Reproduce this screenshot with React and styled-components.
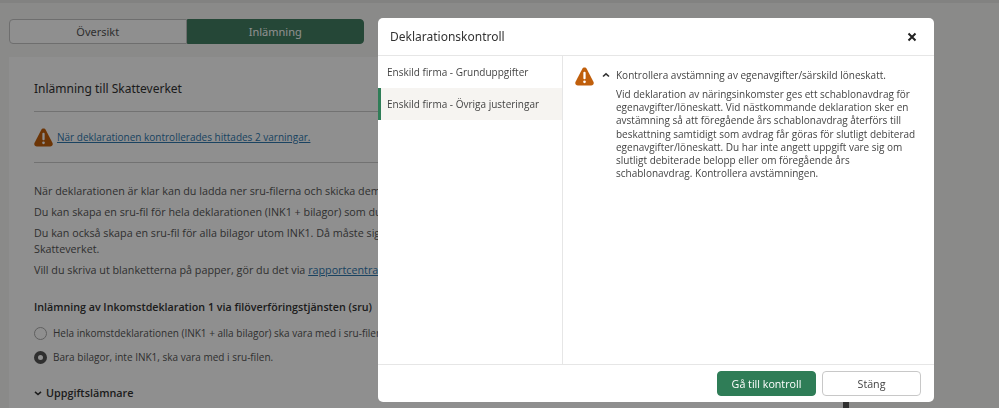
import styled, { createGlobalStyle } from 'styled-components';

const GlobalStyle = createGlobalStyle`
  html, body {
    margin: 0;
    padding: 0;
    height: 100%;
    overflow: hidden;
    background: #f7f7f5;
    font-family: "Open Sans", "Liberation Sans", sans-serif;
    color: #333;
  }
  * { box-sizing: border-box; }
`;

const Page = styled.div`
  height: 408px;
  padding: 16px 0 0 9px;
  border-top: 3px solid #e8e8e6;
  overflow: hidden;
`;

const Tabs = styled.div`
  display: flex;
  width: 355px;
  height: 25px;
`;

const Tab = styled.div`
  flex: 1;
  display: flex;
  align-items: center;
  justify-content: center;
  font-family: "Noto Sans", sans-serif;
  font-size: 11px;
  border: 1px solid ${(p) => (p.$active ? '#437f62' : '#c4c4c4')};
  border-radius: ${(p) => (p.$active ? '0 4px 4px 0' : '4px 0 0 4px')};
  background: ${(p) => (p.$active ? '#437f62' : '#fff')};
  color: ${(p) => (p.$active ? '#fff' : '#555')};
`;

const Panel = styled.div`
  width: 834px;
  height: 400px;
  margin-top: 13px;
  padding: 22px 25px;
  background: #fff;
`;

const Title = styled.h2`
  margin: 0;
  padding-bottom: 12px;
  font-family: "Noto Sans", sans-serif;
  font-size: 12px;
  font-weight: 400;
  line-height: 20px;
  border-bottom: 1px solid #ccc;
`;

const WarningRow = styled.div`
  display: flex;
  align-items: center;
  gap: 4px;
  height: 51px;
  border-bottom: 1px solid #ccc;
  font-size: 10px;
`;

const Body = styled.div`
  margin-top: 20px;
  font-size: 10.75px;
  line-height: 16px;
  color: #555;

  p {
    margin: 0 0 5px;
    white-space: nowrap;
  }
`;

const Link = styled.a`
  color: #2f78ae;
  text-decoration: underline;
`;

const SubHeading = styled.h3`
  margin: 21px 0 6px;
  font-size: 10.7px;
  font-weight: 600;
  line-height: 16px;
  color: #333;
  white-space: nowrap;
`;

const RadioRow = styled.label`
  display: flex;
  align-items: center;
  gap: 6px;
  height: 24px;
  font-size: 10px;
  color: #555;
  white-space: nowrap;
`;

const RadioDot = styled.span`
  width: 13px;
  height: 13px;
  border-radius: 50%;
  background: #fff;
  border: ${(p) => (p.$checked ? '4px solid #555' : '1px solid #aaa')};
`;

const Expander = styled.div`
  display: flex;
  align-items: center;
  gap: 4px;
  margin-top: 16px;
  font-size: 10.8px;
  font-weight: 600;
  color: #333;
`;

const Backdrop = styled.div`
  position: fixed;
  top: 0;
  left: 0;
  width: 100%;
  height: 100%;
  background: #000;
  opacity: 0.44;
`;

const ScrollThumb = styled.div`
  position: fixed;
  left: 843px;
  top: 402px;
  width: 6px;
  height: 6px;
  background: #2e2e2e;
`;

const Modal = styled.div`
  position: fixed;
  left: 378px;
  top: 18px;
  width: 556px;
  height: 384px;
  display: flex;
  flex-direction: column;
  background: #fff;
  border-radius: 5px;
  overflow: hidden;
`;

const ModalHeader = styled.div`
  flex: none;
  height: 38px;
  display: flex;
  align-items: center;
  justify-content: space-between;
  padding: 0 17px 0 12px;
  border-bottom: 1px solid #e6e6e6;
`;

const ModalTitle = styled.h2`
  margin: 0;
  font-family: "Noto Sans", sans-serif;
  font-size: 12px;
  font-weight: 400;
  color: #333;
`;

const CloseButton = styled.button`
  display: flex;
  padding: 0;
  border: 0;
  background: none;
  color: #222;
`;

const ModalMain = styled.div`
  flex: 1;
  display: flex;
  min-height: 0;
`;

const Sidebar = styled.nav`
  flex: none;
  width: 185px;
  border-right: 1px solid #e6e6e6;
`;

const SidebarItem = styled.div`
  height: 32px;
  display: flex;
  align-items: center;
  padding-left: ${(p) => (p.$active ? '6px' : '9px')};
  border-left: ${(p) => (p.$active ? '3px solid #2f7d57' : '0')};
  background: ${(p) => (p.$active ? '#f6f4f1' : 'transparent')};
  font-size: 10px;
  color: #444;
`;

const Content = styled.div`
  flex: 1;
  display: flex;
  gap: 8px;
  padding: 11px 12px;
`;

const MessageColumn = styled.div`
  flex: 1;
`;

const MessageHead = styled.div`
  display: flex;
  align-items: center;
  gap: 6px;
  height: 16px;
  font-size: 10px;
  color: #444;
`;

const MessageText = styled.p`
  margin: 5px 0 0 14px;
  font-size: 10px;
  line-height: 13.2px;
  color: #444;
  white-space: pre-line;
`;

const ModalFooter = styled.div`
  flex: none;
  height: 38px;
  display: flex;
  align-items: flex-start;
  justify-content: flex-end;
  gap: 6px;
  padding: 6px 13px 0 0;
  border-top: 1px solid #e6e6e6;
`;

const Button = styled.button`
  width: 99px;
  height: 25px;
  padding: 0;
  border-radius: 4px;
  border: 1px solid ${(p) => (p.$primary ? '#2f7d57' : '#c8c8c8')};
  background: ${(p) => (p.$primary ? '#2f7d57' : '#fff')};
  color: ${(p) => (p.$primary ? '#fff' : '#444')};
  font-family: inherit;
  font-size: 10.7px;
  font-weight: ${(p) => (p.$primary ? 500 : 400)};
`;

// rounded triangle, close to the solid alert glyph in the reference
const WarningIcon = ({ size = 19 }) => (
  <svg width={size} height={size} viewBox="0 0 20 20" style={{ flex: 'none' }}>
    <path
      d="M10 .6c1 0 1.9.5 2.4 1.4l7 13.5c1 2-.3 4-2.4 4H3c-2.1 0-3.4-2-2.4-4l7-13.5C8.100 1.100 9 .6 10 .6z"
      fill="#c05f0c"
    />
    <rect x="8.800" y="5" width="2.400" height="8" rx="1.100" fill="#fff" />
    <circle cx="10" cy="15.600" r="1.400" fill="#fff" />
  </svg>
);

const Chevron = ({ up, size = 8, color = '#333' }) => (
  <svg width={size} height={size} viewBox="0 0 8 8" style={{ flex: 'none' }}>
    <path
      d={up ? 'M1 5.500 4 2.800l3 2.700' : 'M1 2.800 4 5.500l3-2.700'}
      fill="none"
      stroke={color}
      strokeWidth="1.600"
    />
  </svg>
);

const App = () => (
  <>
    <GlobalStyle />
    <Page>
      <Tabs>
        <Tab>Översikt</Tab>
        <Tab $active>Inlämning</Tab>
      </Tabs>
      <Panel>
        <Title>Inlämning till Skatteverket</Title>
        <WarningRow>
          <WarningIcon />
          <Link>När deklarationen kontrollerades hittades 2 varningar.</Link>
        </WarningRow>
        <Body>
          <p>När deklarationen är klar kan du ladda ner sru-filerna och skicka dem till Skatteverket.</p>
          <p>Du kan skapa en sru-fil för hela deklarationen (INK1 + bilagor) som du skickar in.</p>
          <p>
            Du kan också skapa en sru-fil för alla bilagor utom INK1. Då måste signera du INK1 hos
            <br />
            Skatteverket.
          </p>
          <p>
            Vill du skriva ut blanketterna på papper, gör du det via <Link>rapportcentralen</Link>.
          </p>
        </Body>
        <SubHeading>Inlämning av Inkomstdeklaration 1 via filöverföringstjänsten (sru)</SubHeading>
        <RadioRow>
          <RadioDot />
          Hela inkomstdeklarationen (INK1 + alla bilagor) ska vara med i sru-filen.
        </RadioRow>
        <RadioRow>
          <RadioDot $checked />
          Bara bilagor, inte INK1, ska vara med i sru-filen.
        </RadioRow>
        <Expander>
          <Chevron />
          Uppgiftslämnare
        </Expander>
      </Panel>
    </Page>
    <Backdrop />
    <ScrollThumb />
    <Modal>
      <ModalHeader>
        <ModalTitle>Deklarationskontroll</ModalTitle>
        <CloseButton aria-label="Stäng">
          <svg width="10" height="10" viewBox="0 0 10 10">
            <path d="M1.500 1.500l7 7M8.500 1.500l-7 7" stroke="#222" strokeWidth="2" />
          </svg>
        </CloseButton>
      </ModalHeader>
      <ModalMain>
        <Sidebar>
          <SidebarItem>Enskild firma - Grunduppgifter</SidebarItem>
          <SidebarItem $active>Enskild firma - Övriga justeringar</SidebarItem>
        </Sidebar>
        <Content>
          <WarningIcon />
          <MessageColumn>
            <MessageHead>
              <Chevron up />
              Kontrollera avstämning av egenavgifter/särskild löneskatt.
            </MessageHead>
            <MessageText>
              {`Vid deklaration av näringsinkomster ges ett schablonavdrag för
egenavgifter/löneskatt. Vid nästkommande deklaration sker en
avstämning så att föregående års schablonavdrag återförs till
beskattning samtidigt som avdrag får göras för slutligt debiterad
egenavgifter/löneskatt. Du har inte angett uppgift vare sig om
slutligt debiterade belopp eller om föregående års
schablonavdrag. Kontrollera avstämningen.`}
            </MessageText>
          </MessageColumn>
        </Content>
      </ModalMain>
      <ModalFooter>
        <Button $primary>Gå till kontroll</Button>
        <Button>Stäng</Button>
      </ModalFooter>
    </Modal>
  </>
);

export default App;
